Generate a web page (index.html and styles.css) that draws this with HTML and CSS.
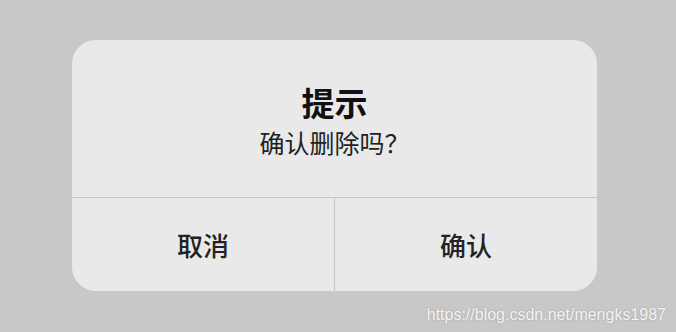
FILE: index.html
```html
<!DOCTYPE html>
<html lang="zh">
<head>
<meta charset="utf-8">
<link rel="stylesheet" href="styles.css">
</head>
<body>
<div class="dialog">
  <div class="content">
    <div class="title">提示</div>
    <div class="message">确认删除吗？</div>
  </div>
  <div class="actions">
    <div class="btn">取消</div>
    <div class="btn btn-right">确认</div>
  </div>
</div>
<div class="watermark">https://blog.csdn.net/mengks1987</div>
</body>
</html>
```
FILE: styles.css
```css
html, body {
  margin: 0;
  padding: 0;
}
body {
  width: 676px;
  height: 332px;
  background: #c8c8c8;
  font-family: "Noto Sans CJK SC", "Noto Sans", sans-serif;
  position: relative;
  overflow: hidden;
  padding-top: 40px;
  box-sizing: border-box;
}
.dialog {
  margin-left: 72px;
  width: 525px;
  height: 251px;
  background: #e9e9e9;
  border-radius: 24px;
  display: flex;
  flex-direction: column;
  overflow: hidden;
}
.content {
  height: 158px;
  box-sizing: border-box;
  padding-top: 41px;
  border-bottom: 1px solid #c4c4c4;
  display: flex;
  flex-direction: column;
  align-items: center;
  gap: 4px;
}
.title {
  font-size: 33px;
  line-height: 42px;
  font-weight: 700;
  color: #111;
}
.message {
  font-size: 25px;
  line-height: 30px;
  color: #222;
}
.actions {
  flex: 1;
  display: flex;
}
.btn {
  flex: 1;
  display: flex;
  align-items: center;
  justify-content: center;
  font-size: 26px;
  color: #222;
  font-weight: 500;
}
.btn-right {
  border-left: 1px solid #c4c4c4;
}
.watermark {
  position: absolute;
  right: 10px;
  bottom: 8px;
  font-family: "Liberation Sans", Arial, sans-serif;
  font-size: 16px;
  color: #f4f4f4;
  text-shadow: 0 0 2px #9a9a9a;
}
```
